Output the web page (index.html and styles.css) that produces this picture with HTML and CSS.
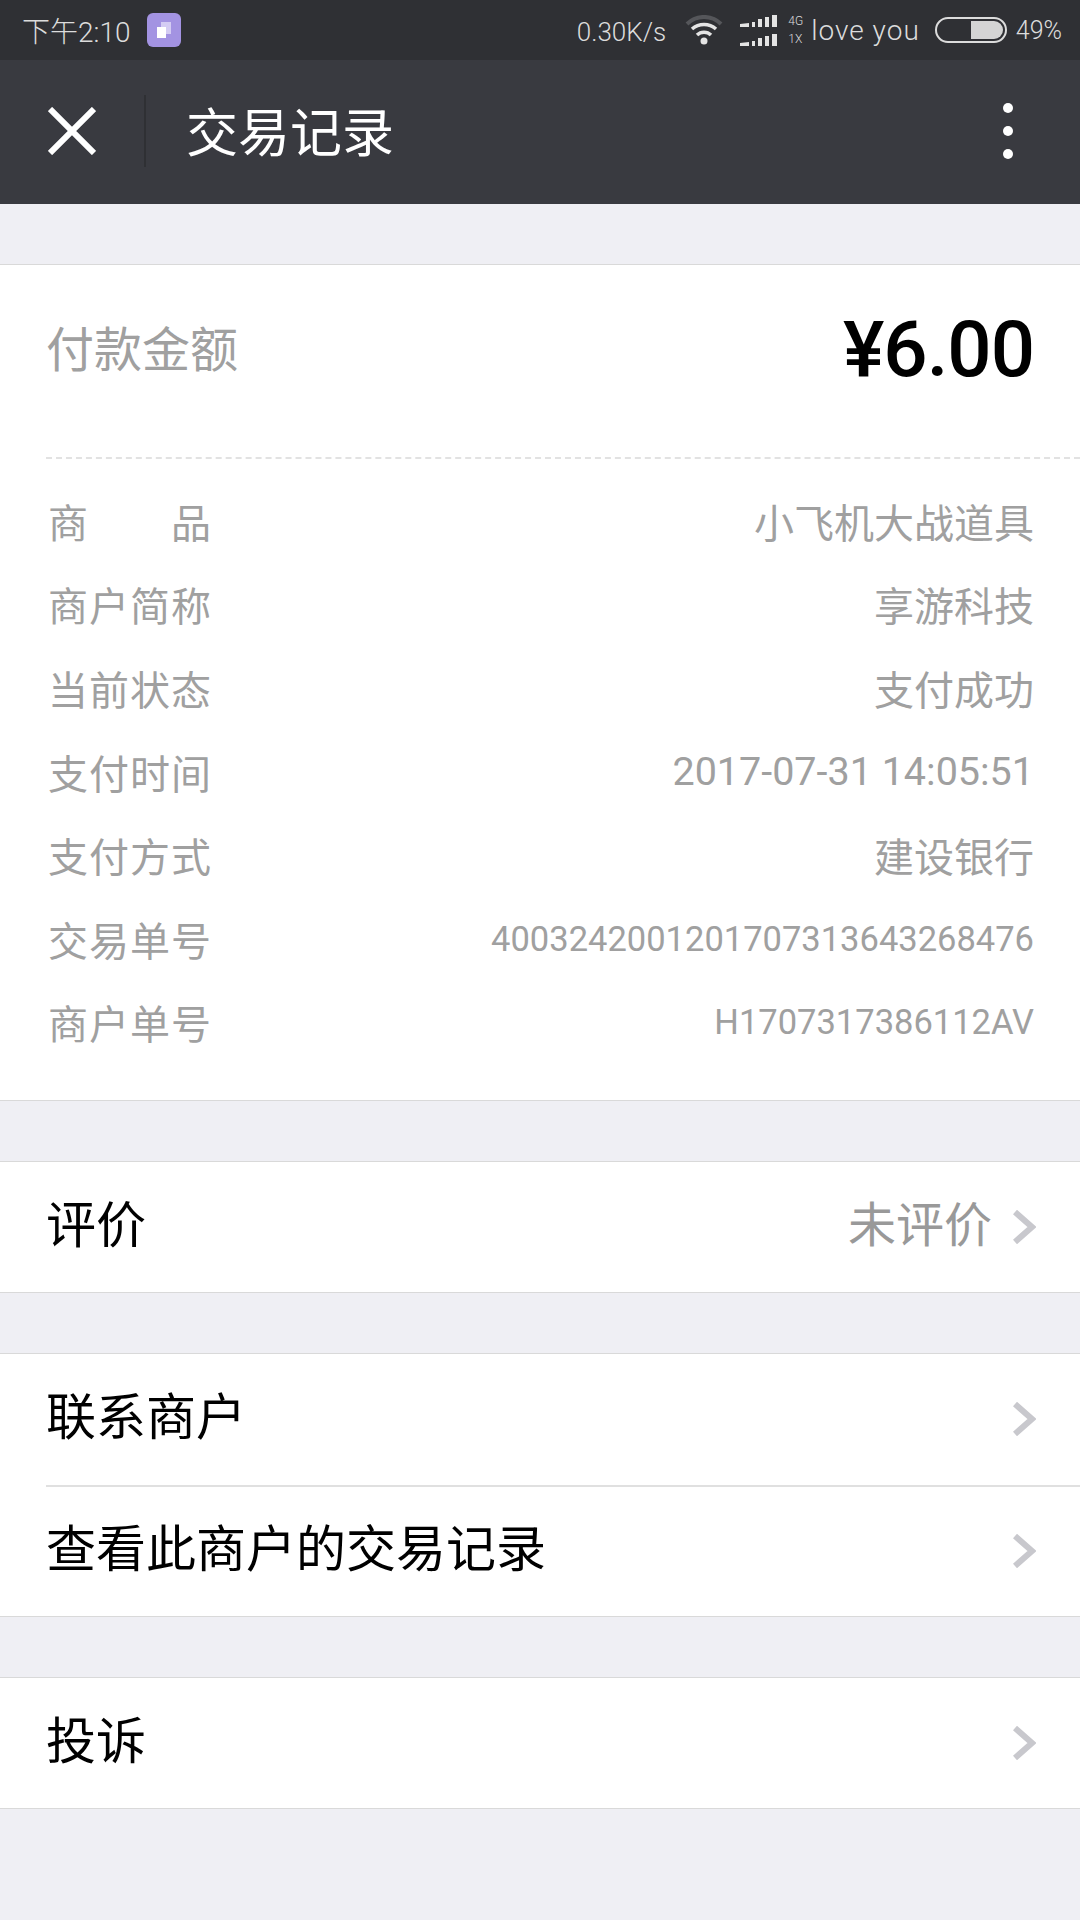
FILE: index.html
```html
<!DOCTYPE html>
<html lang="zh-CN">
<head>
    <meta charset="UTF-8">
    <meta name="viewport" content="width=device-width, initial-scale=1.0">
    <title>交易记录</title>
    <link rel="stylesheet" href="styles.css">
</head>
<body>
    <div class="statusbar">
        <span class="time">下午2:10</span>
        <div class="app-icon"><span class="sheet-back"></span><span class="sheet-front"></span></div>
        <span class="speed">0.30K/s</span>
        <svg class="wifi" width="38" height="30" viewBox="0 0 38 30">
            <path d="M2 9 A24 24 0 0 1 36 9" fill="none" stroke="#55565a" stroke-width="4"/>
            <path d="M7 14 A18 18 0 0 1 31 14" fill="none" stroke="#e4e4e4" stroke-width="3.5"/>
            <path d="M12 20 A10 10 0 0 1 26 20" fill="none" stroke="#e4e4e4" stroke-width="3.5"/>
            <circle cx="19" cy="26" r="3.5" fill="#e4e4e4"/>
        </svg>
        <div class="signals">
            <svg width="38" height="12" viewBox="0 0 38 12"><path d="M0 12V9L9 8V12ZM12 12V7H15V12ZM18 12V4H22V12ZM25 12V2H29V12ZM32 12V0H37V12Z" fill="#e4e4e4"/></svg>
            <svg width="38" height="12" viewBox="0 0 38 12"><path d="M0 12V9L9 8V12ZM12 12V7H15V12ZM18 12V4H22V12ZM25 12V2H29V12ZM32 12V0H37V12Z" fill="#e4e4e4"/></svg>
        </div>
        <div class="net"><span>4G</span><span>1X</span></div>
        <span class="carrier">love you</span>
        <div class="battery"><span class="battery-level"></span></div>
        <span class="percent">49%</span>
    </div>

    <header class="navbar">
        <svg class="close" width="48" height="48" viewBox="0 0 48 48">
            <path d="M2 2L46 46M46 2L2 46" stroke="#fff" stroke-width="6" fill="none"/>
        </svg>
        <span class="nav-divider"></span>
        <h1 class="title">交易记录</h1>
        <div class="more"><span></span><span></span><span></span></div>
    </header>

    <section class="group detail">
        <div class="amount">
            <span class="amount-label">付款金额</span>
            <span class="amount-value">¥6.00</span>
        </div>
        <div class="info-list">
            <div class="info-row"><span class="info-label">商 品</span><span>小飞机大战道具</span></div>
            <div class="info-row"><span class="info-label">商户简称</span><span>享游科技</span></div>
            <div class="info-row"><span class="info-label">当前状态</span><span>支付成功</span></div>
            <div class="info-row"><span class="info-label">支付时间</span><span class="date">2017-07-31 14:05:51</span></div>
            <div class="info-row"><span class="info-label">支付方式</span><span>建设银行</span></div>
            <div class="info-row"><span class="info-label">交易单号</span><span class="num">4003242001201707313643268476</span></div>
            <div class="info-row"><span class="info-label">商户单号</span><span class="num">H1707317386112AV</span></div>
        </div>
    </section>

    <section class="group">
        <div class="cell">
            <span class="cell-text">评价</span>
            <span class="cell-note">未评价</span>
            <svg class="arrow" width="24" height="34" viewBox="0 0 24 34"><path d="M3 2L20 17L3 32" fill="none" stroke="#c8c8cd" stroke-width="6"/></svg>
        </div>
    </section>

    <section class="group">
        <div class="cell">
            <span class="cell-text">联系商户</span>
            <svg class="arrow" width="24" height="34" viewBox="0 0 24 34"><path d="M3 2L20 17L3 32" fill="none" stroke="#c8c8cd" stroke-width="6"/></svg>
        </div>
        <div class="cell cell-line">
            <span class="cell-text">查看此商户的交易记录</span>
            <svg class="arrow" width="24" height="34" viewBox="0 0 24 34"><path d="M3 2L20 17L3 32" fill="none" stroke="#c8c8cd" stroke-width="6"/></svg>
        </div>
    </section>

    <section class="group">
        <div class="cell">
            <span class="cell-text">投诉</span>
            <svg class="arrow" width="24" height="34" viewBox="0 0 24 34"><path d="M3 2L20 17L3 32" fill="none" stroke="#c8c8cd" stroke-width="6"/></svg>
        </div>
    </section>
</body>
</html>
```

FILE: styles.css
```css
* {
    box-sizing: border-box;
}
body {
    font-family: Roboto, "Noto Sans CJK SC", sans-serif;
    background: #efeff4;
    color: #000;
    margin: 0;
    height: 1920px;
    overflow: hidden;
}

/* status bar */
.statusbar {
    height: 60px;
    background: #2f3034;
    color: #dcdcdc;
    display: flex;
    align-items: center;
    padding: 0 18px 0 22px;
    font-size: 26px;
    font-weight: 300;
}
.time {
    font-size: 28px;
    width: 125px;
    white-space: nowrap;
}
.app-icon {
    position: relative;
    width: 34px;
    height: 34px;
    background: #a393e2;
    border-radius: 6px;
}
.sheet-back {
    position: absolute;
    left: 14px;
    top: 9px;
    width: 10px;
    height: 12px;
    background: #d4ccf3;
}
.sheet-front {
    position: absolute;
    left: 10px;
    top: 14px;
    width: 9px;
    height: 11px;
    background: #fff;
}
.speed {
    margin-left: auto;
    margin-top: 3px;
    white-space: nowrap;
}
.wifi {
    margin-left: 19px;
}
.signals {
    display: flex;
    flex-direction: column;
    gap: 7px;
    margin-left: 17px;
}
.signals svg {
    display: block;
}
.net {
    display: flex;
    flex-direction: column;
    font-size: 12px;
    line-height: 18px;
    margin-left: 10px;
    width: 15px;
}
.carrier {
    margin-left: 8px;
    font-size: 28px;
    letter-spacing: 1px;
    white-space: nowrap;
}
.battery {
    width: 72px;
    height: 26px;
    margin-left: 15px;
    border: 2px solid #dcdcdc;
    border-radius: 13px;
    padding: 2px;
    display: flex;
    justify-content: flex-end;
}
.battery-level {
    width: 32px;
    background: #d4d4d4;
    border-radius: 0 9px 9px 0;
}
.percent {
    margin-left: 9px;
    font-size: 25px;
    white-space: nowrap;
}

/* nav bar */
.navbar {
    height: 144px;
    background: #393a40;
    display: flex;
    align-items: center;
    padding: 0 0 2px 48px;
}
.nav-divider {
    width: 2px;
    height: 72px;
    background: #2f3034;
    margin-left: 48px;
}
.title {
    margin: 0 0 4px 40px;
    color: #fff;
    font-size: 52px;
    font-weight: 400;
}
.more {
    margin-left: auto;
    margin-right: 67px;
    display: flex;
    flex-direction: column;
    gap: 13px;
}
.more span {
    width: 10px;
    height: 10px;
    background: #fff;
    border-radius: 50%;
}

/* groups */
.group {
    margin-top: 60px;
    background: #fff;
    border-top: 1px solid #d9d9d9;
    border-bottom: 1px solid #d9d9d9;
}
.detail {
    height: 837px;
}
.amount {
    height: 194px;
    margin-left: 46px;
    padding: 0 46px 31px 0;
    display: flex;
    align-items: center;
    justify-content: space-between;
    border-bottom: 2px dashed #e2e2e2;
}
.amount-label {
    font-size: 48px;
    color: #a0a0a0;
}
.amount-value {
    font-size: 78px;
    font-weight: 500;
    letter-spacing: -1px;
    margin-top: 8px;
}
.info-list {
    padding-top: 20px;
}
.info-row {
    height: 83.6px;
    padding: 0 46px 0 48px;
    display: flex;
    align-items: center;
    justify-content: space-between;
    font-size: 40px;
    color: #a0a0a0;
    white-space: nowrap;
}
.info-label {
    width: 163px;
    text-align-last: justify;
}
.num {
    font-size: 34.5px;
}
.date {
    font-size: 39.5px;
}
.cell {
    height: 130px;
    padding: 0 44px 0 46px;
    display: flex;
    align-items: center;
}
.cell-line {
    position: relative;
}
.cell-line::before {
    content: "";
    position: absolute;
    left: 46px;
    right: 0;
    top: -1px;
    border-top: 2px solid #e0e0e0;
}
.cell + .cell {
    margin-top: 2px;
}
.cell-text {
    font-size: 50px;
    margin-bottom: 12px;
    white-space: nowrap;
}
.cell-note {
    margin-left: auto;
    margin-bottom: 12px;
    font-size: 48px;
    color: #999;
}
.arrow {
    margin-left: auto;
}
.cell-note + .arrow {
    margin-left: 20px;
}
```
